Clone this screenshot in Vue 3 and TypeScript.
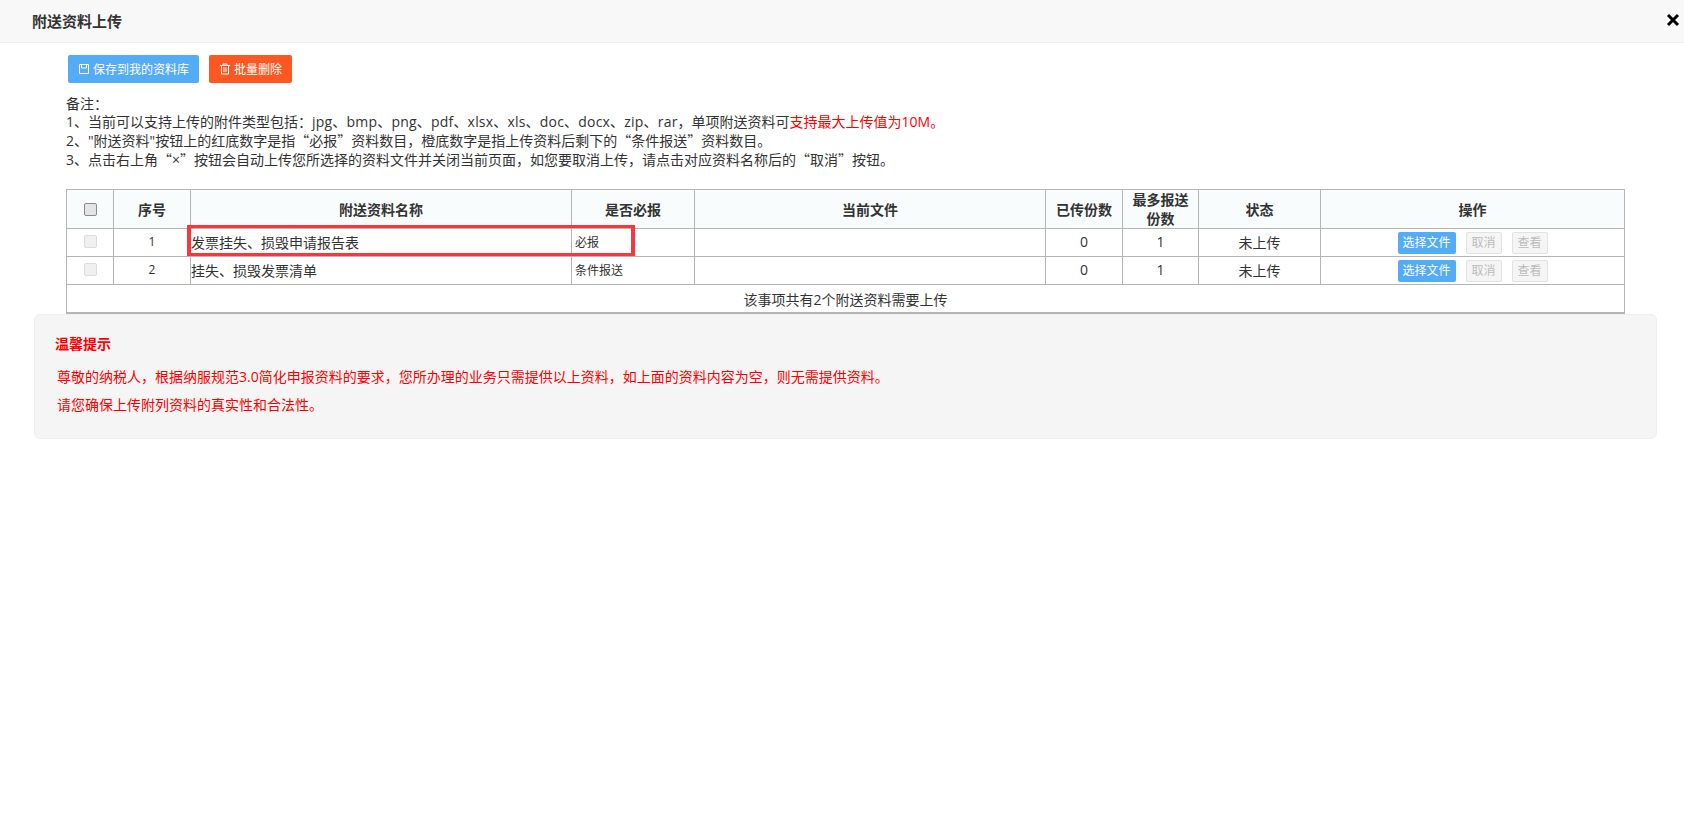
<script setup lang="ts">
interface Row { no: number; name: string; kind: string; uploaded: number; max: number; state: string }
const rows: Row[] = [
  { no: 1, name: '发票挂失、损毁申请报告表', kind: '必报', uploaded: 0, max: 1, state: '未上传' },
  { no: 2, name: '挂失、损毁发票清单', kind: '条件报送', uploaded: 0, max: 1, state: '未上传' },
]
</script>

<template>
  <div class="page">
    <header class="head">
      <span class="title">附送资料上传</span>
      <svg class="close" width="14" height="14" viewBox="0 0 14 14"><path d="M2 2L12 12M12 2L2 12" stroke="#000" stroke-width="3" fill="none" /></svg>
    </header>

    <div class="toolbar">
      <button class="btn blue">
        <svg width="12" height="12" viewBox="0 0 12 12" fill="none" stroke="#fff" stroke-width="1"><path d="M1.5 1.5H10.5V10.5H1.5ZM3.5 1.5V5H8.5V1.5" /></svg>
        保存到我的资料库
      </button>
      <button class="btn orange">
        <svg width="12" height="12" viewBox="0 0 12 12" fill="none" stroke="#fff" stroke-width="1"><path d="M1 2.5H11M4 2.5V1H8V2.5M2.5 2.5V11H9.5V2.5M5 4.5V9M7 4.5V9" /></svg>
        批量删除
      </button>
    </div>

    <div class="notes">
      <div>备注：</div>
      <div>1、当前可以支持上传的附件类型包括：<span class="types">jpg、bmp、png、pdf、xlsx、xls、doc、docx、zip、rar</span>，单项附送资料可<span class="red">支持最大上传值为10M。</span></div>
      <div>2、"附送资料"按钮上的红底数字是指<span class="q">“</span>必报<span class="q">”</span>资料数目，橙底数字是指上传资料后剩下的<span class="q">“</span>条件报送<span class="q">”</span>资料数目。</div>
      <div>3、点击右上角<span class="q">“</span>×<span class="q">”</span>按钮会自动上传您所选择的资料文件并关闭当前页面，如您要取消上传，请点击对应资料名称后的<span class="q">“</span>取消<span class="q">”</span>按钮。</div>
    </div>

    <div class="table-wrap">
      <table class="grid">
        <colgroup>
          <col style="width:47px" /><col style="width:77px" /><col style="width:381px" /><col style="width:123px" />
          <col style="width:351px" /><col style="width:77px" /><col style="width:76px" /><col style="width:122px" /><col style="width:304px" />
        </colgroup>
        <thead>
          <tr>
            <th><input class="check head-check" type="checkbox" /></th>
            <th>序号</th>
            <th>附送资料名称</th>
            <th>是否必报</th>
            <th>当前文件</th>
            <th>已传份数</th>
            <th>最多报送<br />份数</th>
            <th>状态</th>
            <th>操作</th>
          </tr>
        </thead>
        <tbody>
          <tr v-for="r in rows" :key="r.no">
            <td class="center"><input class="check" type="checkbox" disabled /></td>
            <td class="center small">{{ r.no }}</td>
            <td class="name">{{ r.name }}</td>
            <td class="kind">{{ r.kind }}</td>
            <td></td>
            <td class="center">{{ r.uploaded }}</td>
            <td class="center">{{ r.max }}</td>
            <td class="center">{{ r.state }}</td>
            <td class="center ops">
              <span class="mini pick">选择文件</span>
              <span class="mini off">取消</span>
              <span class="mini off">查看</span>
            </td>
          </tr>
          <tr class="foot">
            <td colspan="9">该事项共有2个附送资料需要上传</td>
          </tr>
        </tbody>
      </table>
      <div class="mark"></div>
    </div>

    <section class="tip">
      <h4>温馨提示</h4>
      <p>尊敬的纳税人，根据纳服规范3.0简化申报资料的要求，您所办理的业务只需提供以上资料，如上面的资料内容为空，则无需提供资料。</p>
      <p>请您确保上传附列资料的真实性和合法性。</p>
    </section>
  </div>
</template>

<style>
html, body { margin: 0; background: #fff; }
</style>

<style scoped>
.page {
  width: 1684px;
  height: 813px;
  overflow: hidden;
  font-family: "Open Sans", "Noto Sans CJK SC", sans-serif;
  font-size: 14px;
  color: #333;
}
.head {
  height: 43px;
  box-sizing: border-box;
  border-bottom: 1px solid #eee;
  background: #f8f8f8;
  display: flex;
  align-items: center;
  justify-content: space-between;
  padding: 0 4px 2px 32px;
}
.title { font-size: 15px; font-weight: 700; }
.close { display: block; }
.toolbar {
  display: flex;
  gap: 10px;
  padding: 12px 0 0 68px;
}
.btn {
  height: 28px;
  padding: 0 10px;
  border: 0;
  border-radius: 2px;
  color: #fff;
  font: inherit;
  font-size: 12px;
  display: flex;
  align-items: center;
  gap: 3px;
}
.blue { background: #55acf6; }
.orange { background: #ff5722; }
.notes {
  margin: 12px 0 0 66px;
  line-height: 18px;
}
.red { color: #f00; }
.types { letter-spacing: 0.2px; }
.q { font-family: "Noto Sans CJK SC", sans-serif; }
.table-wrap {
  position: relative;
  margin: 20px 0 0 66px;
  width: 1559px;
}
.grid {
  border-collapse: collapse;
  table-layout: fixed;
  width: 1558px;
  border-bottom: 2px solid #b5b5b5;
}
th, td {
  border: 1px solid #b5b5b5;
  padding: 0;
}
th {
  height: 38px;
  background: #f9fcfd;
  font-weight: 700;
  line-height: 19px;
  text-align: center;
}
td { height: 25px; padding-bottom: 2px; }
.center { text-align: center; }
.small { font-size: 12px; }
.kind { font-size: 12px; padding-left: 3px; }
.name { padding-left: 0; }
td.ops { font-size: 0; white-space: nowrap; height: 27px; padding-bottom: 0; }
.mini {
  display: inline-block;
  box-sizing: border-box;
  font-size: 12px;
  line-height: 20px;
  height: 22px;
  vertical-align: middle;
  border-radius: 2px;
}
.pick { width: 58px; background: #55acf6; color: #fff; line-height: 22px; }
.off {
  width: 36px;
  margin-left: 10px;
  background: #f5f5f5;
  border: 1px solid #e2e2e2;
  color: #bbb;
}
.foot td { height: 27px; padding-bottom: 0; text-align: center; font-size: 14px; }
.check {
  appearance: none;
  display: block;
  margin: 0 auto;
  width: 13px;
  height: 13px;
  border-radius: 2px;
  background: #f0f0f0;
  border: 1px solid #dcdcdc;
}
.head-check { background: #e4e4e4; border-color: #8a8a8a; }
.mark {
  position: absolute;
  left: 121px;
  top: 36px;
  width: 448px;
  height: 31px;
  box-sizing: border-box;
  border-style: solid;
  border-color: #f4383d;
  border-width: 3px 4px;
}
.tip {
  box-sizing: border-box;
  width: 1623px;
  height: 125px;
  margin: 0 0 0 34px;
  padding: 20px 20px 0;
  background: #f5f5f5;
  border: 1px solid #eeeeee;
  border-radius: 6px;
  color: #f00;
}
.tip h4 { margin: 0 0 15px; font-size: 14px; line-height: 18px; font-weight: 700; }
.tip p { margin: 0 0 10px 2px; line-height: 18px; }
</style>
